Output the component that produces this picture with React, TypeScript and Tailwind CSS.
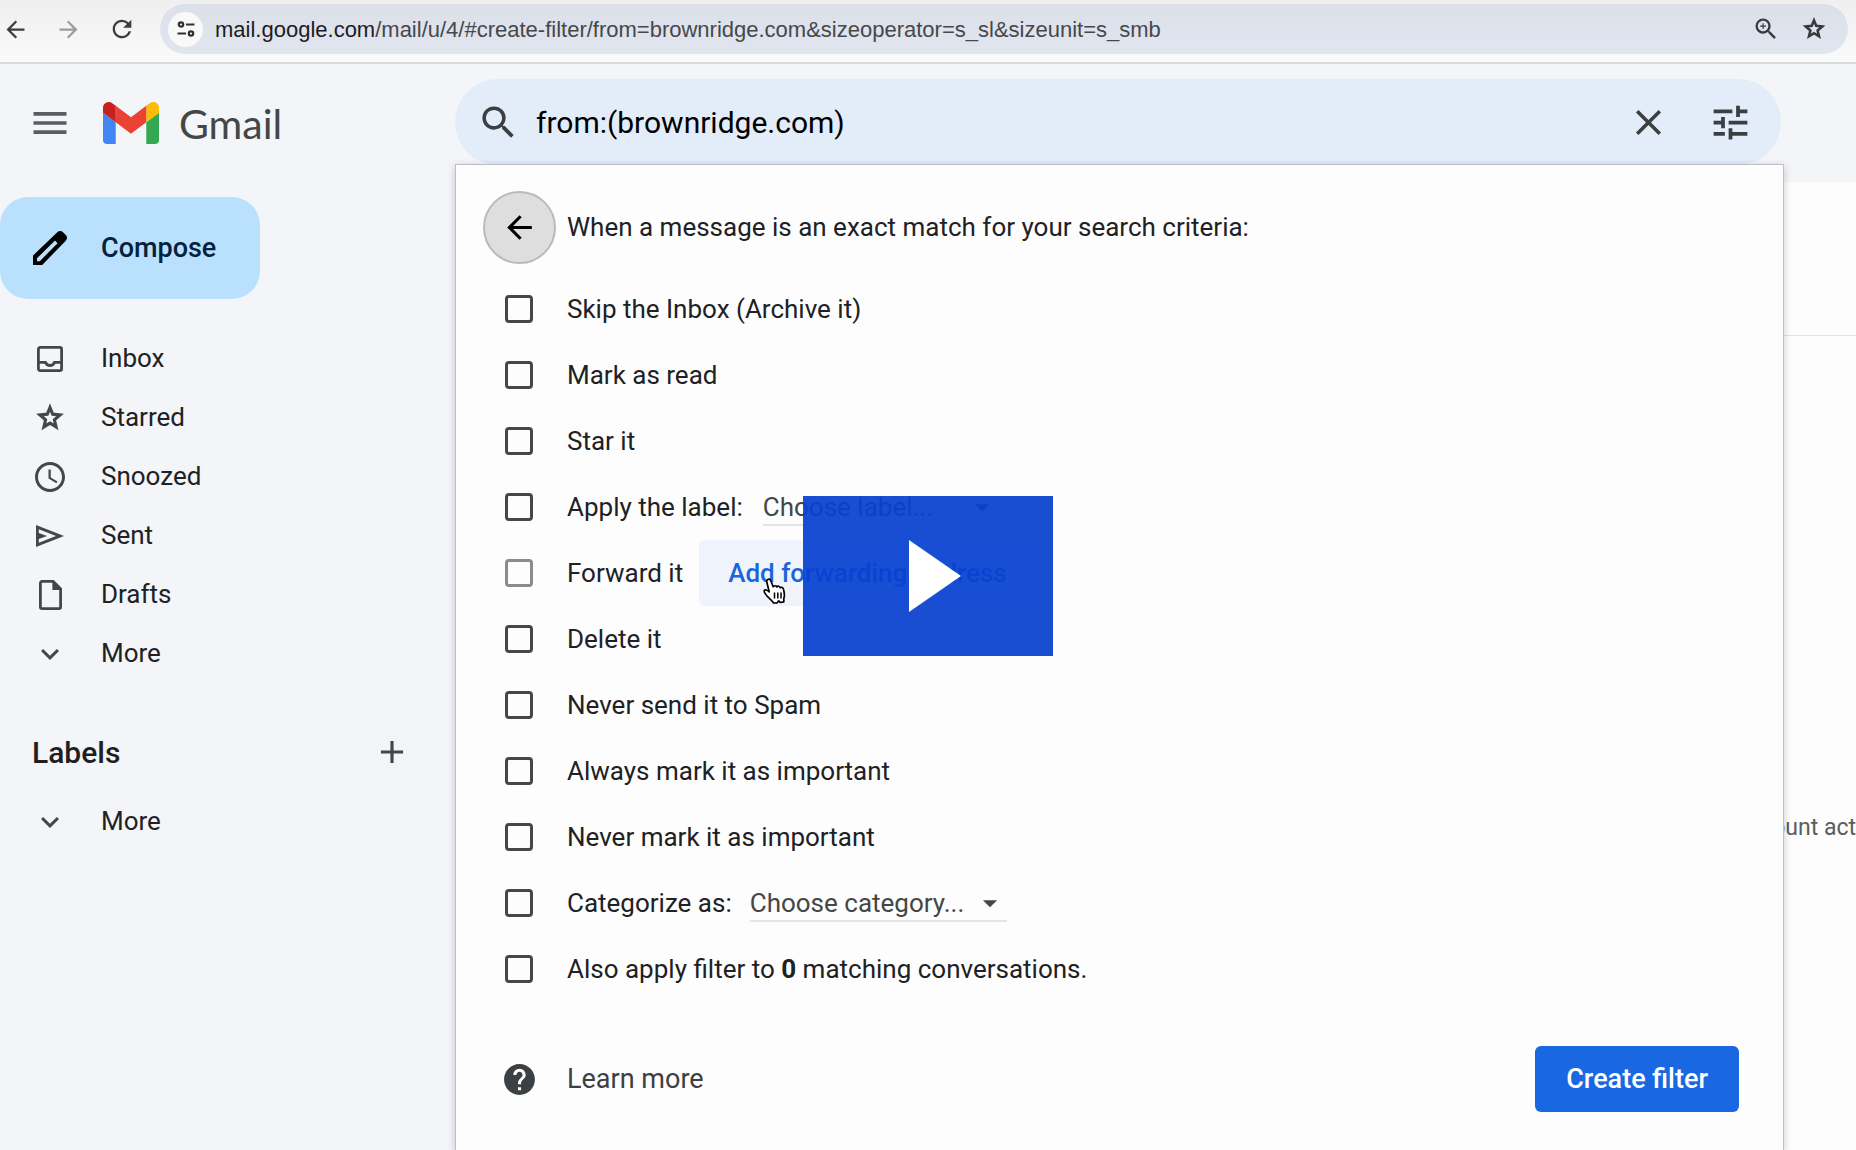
import React, { useState } from 'react';
import {
  MdAdd,
  MdArrowBack,
  MdArrowDropDown,
  MdArrowForward,
  MdClose,
  MdExpandMore,
  MdHelp,
  MdMenu,
  MdRefresh,
  MdSchedule,
  MdSearch,
  MdTune,
  MdZoomIn,
} from 'react-icons/md';

const GmailLogo = () => (
  <svg width="56" height="42" viewBox="52 42 88 66" aria-hidden="true">
    <path fill="#4285f4" d="M58 108h14V74L52 59v43c0 3.32 2.69 6 6 6" />
    <path fill="#34a853" d="M120 108h14c3.32 0 6-2.69 6-6V59l-20 15" />
    <path fill="#fbbc04" d="M120 48v26l20-15v-8c0-7.42-8.47-11.65-14.4-7.2" />
    <path fill="#ea4335" d="M72 74V48l24 18 24-18v26L96 92" />
    <path fill="#c5221f" d="M52 51v8l20 15V48l-5.6-4.2c-5.94-4.45-14.4-.22-14.4 7.2" />
  </svg>
);

const SiteInfoIcon = () => (
  <svg width="18" height="16" viewBox="0 0 18 16" fill="none" stroke="#2f3033" strokeWidth="2.2" aria-hidden="true">
    <circle cx="4" cy="3.5" r="2.2" />
    <path d="M9 3.5h8.5M.5 12.5H9" />
    <circle cx="14" cy="12.5" r="2.2" />
  </svg>
);

const StarIcon = ({ size }: { size: number }) => (
  <svg width={size} height={size} viewBox="0 0 24 24" fill="none" stroke="currentColor" strokeWidth="2.2" aria-hidden="true">
    <path d="M12 4.6l1.9 4.7 5.2.5-4 3.5 1.200 5-4.300-2.700-4.300 2.700 1.200-5-4-3.500 5.200-.5z" />
  </svg>
);

const PencilIcon = () => (
  <svg width="34" height="34" viewBox="0 0 34 34" aria-hidden="true">
    <path
      fill="#000"
      fillRule="evenodd"
      d="M0 34v-9.4L24.3 1.2a4 4 0 0 1 5.700 0L32.800 4a4 4 0 0 1 0 5.700L9.200 34zM4 30.200h2.800L24.600 12.200 22 9.500 4 27.300z"
    />
  </svg>
);

const InboxIcon = () => (
  <svg width="26" height="26" viewBox="0 0 26 26" fill="none" stroke="currentColor" strokeWidth="2.8" aria-hidden="true">
    <rect x="1.4" y="1.4" width="23.2" height="23.2" rx="1.8" />
    <path d="M1.4 16.4h7.1c.9 2.1 2.5 3.1 4.5 3.1s3.6-1 4.5-3.1h7.1" />
  </svg>
);

const SentIcon = () => (
  <svg width="28" height="22" viewBox="0 0 28 22" aria-hidden="true">
    <path fill="currentColor" fillRule="evenodd" d="M0 0l28 11L0 22zM2.8 4.3v3.8L11.2 11l-8.4 2.9v3.8L20 11z" />
  </svg>
);

const DraftIcon = () => (
  <svg width="23" height="30" viewBox="0 0 23 30" aria-hidden="true">
    <path
      d="M3 1.4h11.2l7.4 7.5V27a1.600 1.600 0 0 1-1.600 1.600H3A1.600 1.600 0 0 1 1.400 27V3A1.600 1.600 0 0 1 3 1.400z"
      fill="none"
      stroke="currentColor"
      strokeWidth="2.8"
    />
    <path d="M13.4 1.5v8.4h8.4z" fill="currentColor" />
  </svg>
);

const HandCursor = () => (
  <svg width="24" height="26" viewBox="0 0 24 26" aria-hidden="true">
    <path
      d="M5.2 1.3c1.2-.4 2.2.3 2.6 1.5l2.4 6c.6-1.4 3.1-1.5 3.6.1.8-1.1 3-.9 3.4.8 1.2-.8 3-.1 3.3 1.5.9 3.3 1.5 6.1.3 9.3v3.3l-3.5.7-1.5-1.7-1.6 2-3.6.2c-1.6-2.8-4.3-4.6-6.3-6.7C2.3 16 .7 14.5 1.2 12.8c.8-1.600 2.800-1 5 1.100L3.800 4c-.3-1.300.3-2.300 1.400-2.700z"
      fill="#fff"
      stroke="#000"
      strokeWidth="1.7"
      strokeLinejoin="round"
    />
    <path d="M11.5 14.5v6M14.8 14.5v6M18 14.5v6" stroke="#000" strokeWidth="1.5" />
  </svg>
);

const folders = [
  { name: 'Inbox', icon: <InboxIcon /> },
  { name: 'Starred', icon: <StarIcon size={34} /> },
  { name: 'Snoozed', icon: <MdSchedule size={36} /> },
  { name: 'Sent', icon: <SentIcon /> },
  { name: 'Drafts', icon: <DraftIcon /> },
  { name: 'More', icon: <MdExpandMore size={36} /> },
];

const BrowserBar = () => (
  <div className="flex h-16 shrink-0 items-start border-b-2 border-[#d9dbdb] bg-linear-to-b from-[#efefef] to-[#fafafa] pt-1 pr-2">
    <div className="flex h-[50px] w-40 shrink-0 items-center gap-[26px] pl-[2px] text-[#3c3d40]">
      <button aria-label="Back"><MdArrowBack size={27} /></button>
      <button aria-label="Forward" className="text-[#9b9c9e]"><MdArrowForward size={27} /></button>
      <button aria-label="Reload"><MdRefresh size={28} /></button>
    </div>
    <div className="flex h-[50px] min-w-0 flex-1 items-center rounded-full bg-linear-to-b from-[#dce0e9] to-[#e1e5ef] pr-5 pl-2">
      <button aria-label="Site information" className="flex size-[35px] shrink-0 items-center justify-center rounded-full bg-[#f9f9fa]">
        <SiteInfoIcon />
      </button>
      <p className="ml-3 flex-1 truncate font-['Liberation_Sans',sans-serif] text-[22px] text-[#46484b]">
        <span className="text-[#1c1d1f]">mail.google.com</span>/mail/u/4/#create-filter/from=brownridge.com&amp;sizeoperator=s_sl&amp;sizeunit=s_smb
      </p>
      <div className="flex items-center gap-5 text-[#38393c]">
        <button aria-label="Zoom"><MdZoomIn size={28} /></button>
        <button aria-label="Bookmark this page"><StarIcon size={28} /></button>
      </div>
    </div>
  </div>
);

const Sidebar = () => (
  <aside className="w-[455px] shrink-0">
    <div className="flex h-[118px] items-center pl-7 text-[#5a5d61]">
      <button aria-label="Main menu"><MdMenu size={44} /></button>
      <a href="#inbox" className="ml-[31px] flex items-center gap-5">
        <GmailLogo />
        <span className="font-[Lato,sans-serif] text-[41px] leading-none text-[#444746]">Gmail</span>
      </a>
    </div>
    <button className="mt-[15px] flex h-[102px] w-[260px] items-center gap-[34px] rounded-[28px] bg-[#b9e1fd] pl-[33px] text-[27px] font-medium text-[#06213d]">
      <PencilIcon />
      Compose
    </button>
    <nav className="mt-[30px]">
      {folders.map(f => (
        <a key={f.name} href={'#' + f.name.toLowerCase()} className="flex h-[59px] items-center gap-[33px] pl-8 text-[26px] text-[#202124]">
          <span className="flex w-9 justify-center text-[#444746]">{f.icon}</span>
          {f.name}
        </a>
      ))}
    </nav>
    <div className="mt-[35px] flex h-[68px] items-center justify-between pr-11 pl-8">
      <h2 className="text-[30px] font-medium text-[#1f1f1f]">Labels</h2>
      <button aria-label="Create new label" className="text-[#444746]"><MdAdd size={38} /></button>
    </div>
    <a href="#labels" className="mt-[6px] flex h-[59px] items-center gap-[33px] pl-8 text-[26px] text-[#202124]">
      <span className="flex w-9 justify-center text-[#444746]"><MdExpandMore size={36} /></span>
      More
    </a>
  </aside>
);

interface FilterRowProps {
  id: string;
  label: React.ReactNode;
  disabled?: boolean;
  children?: React.ReactNode;
}

const FilterRow: React.FC<FilterRowProps> = ({ id, label, disabled, children }) => {
  const [checked, setChecked] = useState(false);

  return (
    <div className="flex h-[66px] items-center">
      <input
        id={id}
        type="checkbox"
        disabled={disabled}
        checked={checked}
        onChange={e => setChecked(e.target.checked)}
        className="size-7 shrink-0 appearance-none rounded-[4px] border-3 border-[#474747] checked:bg-[#0b57d0] disabled:border-[#8b8b8b]"
      />
      <label htmlFor={id} className="ml-[34px]">{label}</label>
      {children}
    </div>
  );
};

interface PickerProps {
  label: string;
  placeholder: string;
  className: string;
}

const Picker: React.FC<PickerProps> = ({ label, placeholder, className }) => (
  <div className={`relative flex items-center border-b-2 border-[#e4e5e7] pt-[2px] text-[#444746] ${className}`}>
    <select aria-label={label} className="h-[34px] w-full appearance-none bg-transparent leading-8">
      <option>{placeholder}</option>
    </select>
    <MdArrowDropDown size={34} className="pointer-events-none absolute right-0" />
  </div>
);

const FilterPanel = () => (
  <section className="absolute top-[100px] right-[72px] bottom-0 left-0 border border-b-0 border-[#bcbfc6] bg-[#fdfdfd] pt-[26px] pr-11 pl-[49px] text-[26px] text-[#202124] shadow-[0_2px_8px_rgba(0,0,0,0.2)]">
    <div className="-ml-[22px] flex items-center gap-[11px]">
      <button aria-label="Back" className="flex size-[73px] items-center justify-center rounded-full border-2 border-[#b9babd] bg-[#dedede] text-black">
        <MdArrowBack size={37} />
      </button>
      <h1>When a message is an exact match for your search criteria:</h1>
    </div>
    <div className="mt-3">
      <FilterRow id="archive" label="Skip the Inbox (Archive it)" />
      <FilterRow id="read" label="Mark as read" />
      <FilterRow id="star" label="Star it" />
      <FilterRow id="label" label="Apply the label:">
        <Picker label="Label" placeholder="Choose label..." className="ml-5 w-[236px]" />
      </FilterRow>
      <FilterRow id="forward" label="Forward it" disabled>
        <div className="relative ml-4">
          <button className="h-[66px] rounded-md bg-[#eff3fc] px-[29px] font-medium text-[#1a66d8]">Add forwarding address</button>
          <span className="pointer-events-none absolute top-[38px] left-[64px]"><HandCursor /></span>
        </div>
      </FilterRow>
      <FilterRow id="delete" label="Delete it" />
      <FilterRow id="spam" label="Never send it to Spam" />
      <FilterRow id="important" label="Always mark it as important" />
      <FilterRow id="unimportant" label="Never mark it as important" />
      <FilterRow id="category" label="Categorize as:">
        <Picker label="Category" placeholder="Choose category..." className="ml-[18px] w-[257px]" />
      </FilterRow>
      <FilterRow id="existing" label={<>Also apply filter to <b>0</b> matching conversations.</>} />
    </div>
    <div className="mt-11 flex items-center justify-between text-[27px] text-[#3c4043]">
      <a href="#help" className="flex items-center gap-[29px]">
        <MdHelp size={37} className="-ml-1" />
        Learn more
      </a>
      <button className="h-[66px] rounded-md bg-[#1a67e2] px-[31px] font-medium text-white">Create filter</button>
    </div>
  </section>
);

const App = () => (
  <div className="flex h-screen flex-col overflow-hidden bg-[#f3f5f9] font-[Roboto,sans-serif]">
    <BrowserBar />
    <div className="flex min-h-0 flex-1">
      <Sidebar />
      <main className="relative flex min-w-0 flex-1 flex-col">
        <header className="h-[118px] shrink-0 pt-[15px] pr-[75px]">
          <form role="search" className="flex h-[86px] items-center rounded-full bg-[#e3ecf9] pr-7 pl-[22px] text-[#3c3f41]" onSubmit={e => e.preventDefault()}>
            <button aria-label="Search"><MdSearch size={43} /></button>
            <input
              aria-label="Search mail"
              defaultValue="from:(brownridge.com)"
              className="ml-4 min-w-0 flex-1 bg-transparent text-[30px] text-black outline-none"
            />
            <button type="button" aria-label="Clear search" className="mr-[38px]"><MdClose size={43} /></button>
            <button type="button" aria-label="Show search options"><MdTune size={45} /></button>
          </form>
        </header>
        <div className="flex-1 bg-[#fdfdfd]">
          <div className="h-[154px] border-b border-[#e3e4e6]" />
          <p className="mt-[475px] overflow-hidden text-right text-[23px] whitespace-nowrap text-[#5b5d60]">ount act</p>
        </div>
        <FilterPanel />
      </main>
    </div>
    <div className="pointer-events-none fixed inset-0 flex items-center justify-center pt-[2px]">
      <button aria-label="Play video" className="pointer-events-auto flex h-40 w-[250px] items-center justify-center bg-[#0741d0]/93">
        <svg width="52" height="72" viewBox="0 0 52 72" className="ml-[14px]" aria-hidden="true">
          <path d="M0 0l52 36L0 72z" fill="#fff" />
        </svg>
      </button>
    </div>
  </div>
);

export default App;
